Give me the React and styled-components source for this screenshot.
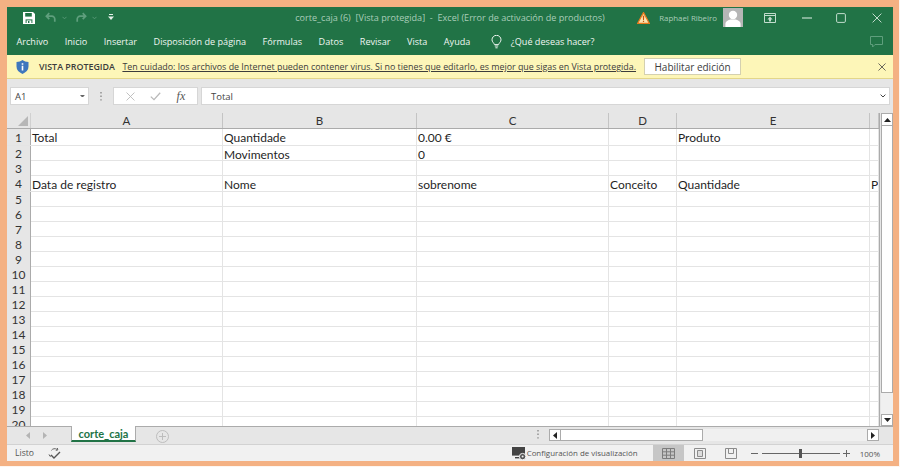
import React from 'react';
import styled, { createGlobalStyle } from 'styled-components';

const Global = createGlobalStyle`
  html, body { margin: 0; padding: 0; background: #fdf6f0; }
  body { font-family: "Open Sans", "Liberation Sans", sans-serif; }
`;

const Frame = styled.div`
  width: 899px;
  height: 466px;
  box-sizing: border-box;
  padding: 7px 6px 5px 7px;
  background: #f4b183;
`;

const Excel = styled.div`
  width: 886px;
  height: 454px;
  display: flex;
  flex-direction: column;
  background: #e6e6e6;
  overflow: hidden;
`;

const TitleBar = styled.div`
  height: 21px;
  flex: none;
  display: grid;
  grid-template-columns: 1fr auto 1fr;
  align-items: center;
  background: #217346;
  color: #a9cdb9;
  font-size: 9.1px;
`;

const Quick = styled.div`
  display: flex;
  align-items: center;
  padding-left: 16px;
`;

const QuickGap = styled.span`
  width: ${p => p.$w}px;
`;

const WinTitle = styled.div`
  white-space: pre;
`;

const WinControls = styled.div`
  display: flex;
  align-items: center;
  justify-content: flex-end;
  padding-right: 4px;
`;

const UserName = styled.span`
  margin: 0 6px 0 9px;
  font-size: 7.9px;
`;

const Avatar = styled.div`
  width: 20px;
  height: 19px;
  display: flex;
  background: #b6b6b6;
`;

const WinBtn = styled.div`
  width: ${p => p.$w}px;
  display: flex;
  justify-content: center;
`;

const MenuBar = styled.div`
  height: 27px;
  flex: none;
  display: flex;
  align-items: center;
  gap: 16.5px;
  padding: 0 10px 0 9.5px;
  background: #217346;
  color: #f0f6f2;
  font-size: 9.1px;
`;

const Ask = styled.div`
  display: flex;
  align-items: center;
  gap: 9px;
  margin-left: 4px;
`;

const Bubble = styled.div`
  margin-left: auto;
  display: flex;
`;

const MessageBar = styled.div`
  height: 24px;
  flex: none;
  box-sizing: border-box;
  display: flex;
  align-items: center;
  padding: 0 6px 0 9px;
  background: #fdf6b8;
  border-bottom: 1px solid #e3d68a;
  color: #3c3c3c;
  font-size: 8.9px;
`;

const MsgTitle = styled.span`
  margin: 0 7.5px 0 10px;
  font-weight: 600;
  font-size: 8.9px;
`;

const MsgLink = styled.span`
  text-decoration: underline;
  white-space: nowrap;
`;

const EnableBtn = styled.div`
  width: 97px;
  height: 17px;
  box-sizing: border-box;
  margin-left: 8px;
  display: flex;
  align-items: center;
  justify-content: center;
  background: #fff;
  border: 1px solid #d4d0b0;
  font-size: 10px;
`;

const MsgClose = styled.div`
  margin-left: auto;
  margin-right: 1px;
  display: flex;
`;

const FormulaBar = styled.div`
  height: 34px;
  flex: none;
  box-sizing: border-box;
  padding: 8px 3px;
  display: flex;
  align-items: stretch;
  background: #e6e6e6;
`;

const FieldBox = styled.div`
  box-sizing: border-box;
  display: flex;
  align-items: center;
  background: #fff;
  border: 1px solid #d6d6d6;
  color: #444;
  font-size: 9.5px;
`;

const NameBox = styled(FieldBox)`
  width: 79px;
  padding: 0 3px 0 4px;
  justify-content: space-between;
`;

const Grip = styled.div`
  width: 24px;
  display: flex;
  align-items: center;
  justify-content: center;
`;

const FxBox = styled(FieldBox)`
  width: 85px;
  justify-content: space-around;
  padding: 0 4px;
`;

const FxGlyph = styled.span`
  font-family: "Liberation Serif", serif;
  font-style: italic;
  font-size: 12px;
  color: #555;
`;

const FormulaInput = styled(FieldBox)`
  flex: 1;
  margin-left: 3px;
  padding: 0 3px 0 9px;
  justify-content: space-between;
`;

const SheetArea = styled.div`
  height: 313px;
  flex: none;
  display: flex;
`;

const GridWrap = styled.div`
  width: 872px;
  overflow: hidden;
  border-right: 1px solid #ababab;
  background: #fff;
  font-family: Lato, "Liberation Sans", sans-serif;
`;

const Cols = '24px 192px 194px 192px 68px 193px 9px';

const HeaderRow = styled.div`
  display: grid;
  grid-template-columns: ${Cols};
  height: 16px;
  box-sizing: border-box;
  background: #e6e6e6;
  border-bottom: 1px solid #ababab;
`;

const Corner = styled.div`
  position: relative;
  border-right: 1px solid #d0d0d0;
  &::after {
    content: "";
    position: absolute;
    right: 2px;
    bottom: 2px;
    width: 0;
    height: 0;
    border-left: 10px solid transparent;
    border-bottom: 10px solid #b7b7b7;
  }
`;

const ColHead = styled.div`
  box-sizing: border-box;
  display: flex;
  align-items: center;
  justify-content: center;
  border-right: 1px solid #c4c4c4;
  color: #333;
  font-size: 11.5px;
`;

const Row = styled.div`
  display: grid;
  grid-template-columns: ${Cols};
  height: ${p => p.$h}px;
  box-sizing: border-box;
  border-bottom: 1px solid #e4e4e4;
`;

const RowHead = styled.div`
  display: flex;
  align-items: center;
  justify-content: center;
  background: #e6e6e6;
  border-right: 1px solid #ababab;
  color: #333;
  font-size: 12px;
`;

const Cell = styled.div`
  box-sizing: border-box;
  padding: 1px 0 0 1px;
  display: flex;
  align-items: center;
  overflow: hidden;
  white-space: nowrap;
  border-right: 1px solid #e4e4e4;
  color: #1f1f1f;
  font-size: 12px;
`;

const VScroll = styled.div`
  width: 12px;
  margin-left: 1px;
  display: flex;
  flex-direction: column;
  background: #f0f0f0;
`;

const ScrollBtn = styled.div`
  flex: none;
  width: 12px;
  height: ${p => p.$h || 12}px;
  box-sizing: border-box;
  display: flex;
  align-items: center;
  justify-content: center;
  background: #fff;
  border: 1px solid #ababab;
`;

const VThumb = styled.div`
  height: 267px;
  flex: none;
  box-sizing: border-box;
  background: #fff;
  border: 1px solid #ababab;
  border-top: 0;
`;

const VTrack = styled.div`
  flex: 1;
`;

const TabBar = styled.div`
  height: 19px;
  flex: none;
  box-sizing: border-box;
  display: flex;
  align-items: flex-start;
  background: #e6e6e6;
  border-top: 1px solid #ababab;
  border-bottom: 1px solid #d2d2d2;
`;

const TabNav = styled.div`
  width: 64px;
  height: 17px;
  box-sizing: border-box;
  padding: 0 24px 0 19px;
  display: flex;
  align-items: center;
  justify-content: space-between;
`;

const Tab = styled.div`
  width: 65px;
  height: 16px;
  box-sizing: border-box;
  display: flex;
  align-items: center;
  justify-content: center;
  background: #fff;
  border-right: 1px solid #ababab;
  border-left: 1px solid #ababab;
  border-bottom: 2px solid #217346;
  margin-top: -1px;
  color: #217346;
  font-family: Lato, "Liberation Sans", sans-serif;
  font-size: 11px;
  font-weight: 700;
`;

const AddTab = styled.div`
  margin: 3px 0 0 20px;
  display: flex;
`;

const HScrollDots = styled.div`
  margin: 3px 0 0 368px;
  display: flex;
`;

const HScroll = styled.div`
  width: 330px;
  height: 12px;
  margin: 2px 0 0 10px;
  display: flex;
  background: #f0f0f0;
`;

const HThumb = styled.div`
  width: 142px;
  box-sizing: border-box;
  background: #fff;
  border: 1px solid #ababab;
  border-left: 0;
`;

const HTrack = styled.div`
  flex: 1;
`;

const StatusBar = styled.div`
  height: 16px;
  flex: none;
  display: flex;
  align-items: center;
  background: #f1f1f1;
  color: #555;
  font-size: 8.6px;
`;

const Ready = styled.span`
  margin: 0 14px 0 8px;
`;

const DisplayCfg = styled.div`
  margin-left: auto;
  display: flex;
  align-items: center;
  gap: 1px;
  font-size: 7.9px;
`;

const ViewBtn = styled.div`
  width: ${p => p.$w}px;
  height: 16px;
  display: flex;
  align-items: center;
  justify-content: center;
  background: ${p => (p.$active ? '#c6c6c6' : 'transparent')};
  margin-left: ${p => p.$ml || 0}px;
`;

const Zoom = styled.div`
  display: flex;
  align-items: center;
  margin-left: 4px;
`;

const Slider = styled.div`
  position: relative;
  width: 78px;
  height: 1px;
  margin: 0 3px 0 4px;
  background: #666;
  &::after {
    content: "";
    position: absolute;
    left: 37px;
    top: -4px;
    width: 3px;
    height: 9px;
    background: #555;
  }
`;

const ZoomLabel = styled.span`
  margin: 0 13px 0 10px;
  font-size: 8px;
`;

const rows = [
  { h: 17, cells: ['Total', 'Quantidade', '0.00 €', '', 'Produto', ''] },
  { h: 15, cells: ['', 'Movimentos', '0', '', '', ''] },
  { h: 15, cells: [] },
  { h: 16, cells: ['Data de registro', 'Nome', 'sobrenome', 'Conceito', 'Quantidade', 'P'] },
];
for (let i = 0; i < 16; i++) rows.push({ h: 15, cells: [] });

const Save = () => (
  <svg width="12" height="12" viewBox="0 0 12 12">
    <path d="M0 0h10l2 2v10H0z" fill="#fff" />
    <path d="M2.2 1h6.6v3.6H2.2z" fill="#217346" />
    <path d="M2.6 7.4h6.8V11H2.6z" fill="#217346" />
    <path d="M3.6 8.4h4.8V11H3.6z" fill="#fff" />
    <path d="M5 9h1.4v2H5z" fill="#217346" />
  </svg>
);

const Undo = ({ flip }) => (
  <svg width="12" height="11" viewBox="0 0 14 12" style={flip ? { transform: 'scaleX(-1)' } : undefined}>
    <path d="M5 1 1.6 4.4 5 7.8M2 4.4h6a3.4 3.4 0 0 1 3.4 3.4V11" fill="none" stroke="#5f9f7d" strokeWidth="2" />
  </svg>
);

const Chevron = ({ color = '#5f9f7d', w = 6 }) => (
  <svg width={w} height="4" viewBox="0 0 6 4">
    <path d="M.6.6 3 3 5.4.6" fill="none" stroke={color} strokeWidth="1" />
  </svg>
);

const Customize = () => (
  <svg width="6" height="7" viewBox="0 0 6 7">
    <path d="M1 0h4v1H1z" fill="#e4f0e9" />
    <path d="M0 2.6h6L3 6z" fill="#e4f0e9" />
  </svg>
);

const Warning = () => (
  <svg width="13" height="12" viewBox="0 0 13 12">
    <path d="M6.5.6 12.4 11.4H.6z" fill="#fbe3b0" stroke="#e97a1c" strokeWidth="1.2" />
    <path d="M5.8 3.8h1.4L7 8H6zM5.9 8.8h1.2V10H5.9z" fill="#c4540a" />
  </svg>
);

const Person = () => (
  <svg width="20" height="19" viewBox="0 0 20 19">
    <circle cx="10" cy="7" r="4.2" fill="#fff" />
    <path d="M2.4 19v-3c0-2.6 3-4 5-4.4h5.2c2 .4 5 1.8 5 4.4v3z" fill="#fff" />
  </svg>
);

const RibbonDisplay = () => (
  <svg width="12" height="10" viewBox="0 0 12 10">
    <path d="M.5.5h11v9H.5z" fill="none" stroke="#c2dccd" />
    <path d="M.5 2.5h11" stroke="#c2dccd" />
    <path d="M6 3.6 8.6 6.4H7V8.4H5V6.4H3.4z" fill="#c2dccd" />
  </svg>
);

const Minimize = () => (
  <svg width="10" height="10" viewBox="0 0 10 10"><path d="M0 5h10" stroke="#c2dccd" strokeWidth="1.2" /></svg>
);

const Maximize = () => (
  <svg width="10" height="10" viewBox="0 0 10 10">
    <rect x=".6" y=".6" width="8.8" height="8.8" rx="1.2" fill="none" stroke="#c2dccd" />
  </svg>
);

const Cross = ({ size = 10, color = '#c2dccd', sw = 1 }) => (
  <svg width={size} height={size} viewBox="0 0 10 10">
    <path d="M.6.6 9.4 9.4M9.4.6.6 9.4" stroke={color} strokeWidth={sw} fill="none" />
  </svg>
);

const Bulb = () => (
  <svg width="11" height="14" viewBox="0 0 11 14">
    <path d="M3.4 9.6C3 7.8 1 7 1 4.8a4.5 4.5 0 0 1 9 0c0 2.2-2 3-2.4 4.8z" fill="none" stroke="#eef5f0" />
    <path d="M3.8 11h3.4M4.4 12.8h2.2" stroke="#eef5f0" />
  </svg>
);

const Comment = () => (
  <svg width="13" height="12" viewBox="0 0 13 12">
    <path d="M.5.5h12v8H5L2.6 11V8.5H.5z" fill="none" stroke="#5f9f7d" />
  </svg>
);

const Shield = () => (
  <svg width="13" height="14" viewBox="0 0 13 14">
    <path d="M6.5 0c1.6 1.3 3.6 2 6 2v4.6c0 3.4-2.4 5.9-6 7.4-3.6-1.5-6-4-6-7.4V2c2.4 0 4.4-.7 6-2z" fill="#3f77bd" />
    <path d="M5.7 3.2h1.6v1.6H5.7zM5.7 5.8h1.6v4.6H5.7z" fill="#fff" />
  </svg>
);

const GripDots = () => (
  <svg width="2" height="9" viewBox="0 0 2 9">
    <path d="M0 0h2v1.4H0zM0 3.6h2V5H0zM0 7.2h2v1.4H0z" fill="#a6a6a6" />
  </svg>
);

const Check = () => (
  <svg width="11" height="9" viewBox="0 0 11 9">
    <path d="M.8 4.6 4 7.6 10.2.8" fill="none" stroke="#b9b9b9" strokeWidth="1.3" />
  </svg>
);

const Tri = ({ dir, color = '#222', scale = 1 }) => {
  const d = { up: 'M0 4 3.5 0 7 4z', down: 'M0 0h7L3.5 4z', left: 'M4 0v7L0 3.5z', right: 'M0 0v7l4-3.5z' }[dir];
  const vert = dir === 'up' || dir === 'down';
  return (
    <svg width={(vert ? 7 : 4) * scale} height={(vert ? 4 : 7) * scale} viewBox={vert ? '0 0 7 4' : '0 0 4 7'}>
      <path d={d} fill={color} />
    </svg>
  );
};

const SmallArrow = ({ flip }) => (
  <svg width="4" height="7" viewBox="0 0 4 7" style={flip ? { transform: 'scaleX(-1)' } : undefined}>
    <path d="M4 0v7L0 3.5z" fill="#b4b4b4" />
  </svg>
);

const PlusCircle = () => (
  <svg width="13" height="13" viewBox="0 0 13 13">
    <circle cx="6.5" cy="6.5" r="6" fill="none" stroke="#bdbdbd" />
    <path d="M6.5 3v7M3 6.5h7" stroke="#bdbdbd" />
  </svg>
);

const Macro = () => (
  <svg width="14" height="13" viewBox="0 0 14 13">
    <path d="M3.4 3.4A4 4 0 0 1 9 2.4M1 7.4l1 2 2-1.2M9.4 1l.4 2-2 .4" fill="none" stroke="#666" />
    <path d="M3 8 6 11 12 5" fill="none" stroke="#555" strokeWidth="1.4" />
  </svg>
);

const MonitorCog = () => (
  <svg width="14" height="13" viewBox="0 0 14 13">
    <path d="M0 0h13v8.6H0z" fill="#444" />
    <path d="M3 10h5v1.4H3z" fill="#444" />
    <circle cx="10.6" cy="9.6" r="3.2" fill="#555" stroke="#f1f1f1" />
    <circle cx="10.6" cy="9.6" r="1" fill="#f1f1f1" />
  </svg>
);

const NormalView = () => (
  <svg width="13" height="11" viewBox="0 0 13 11">
    <path d="M.5.5h12v10H.5zM.5 3.8h12M.5 7.2h12M4.5.5v10M8.5.5v10" fill="none" stroke="#7c7c7c" />
  </svg>
);

const PageView = () => (
  <svg width="12" height="11" viewBox="0 0 12 11">
    <path d="M.5.5h11v10H.5z" fill="none" stroke="#8c8c8c" />
    <path d="M3.5 2.5h5v6h-5z" fill="#ddd" stroke="#8c8c8c" />
  </svg>
);

const BreakView = () => (
  <svg width="12" height="11" viewBox="0 0 12 11">
    <path d="M.5.5h11v10H.5zM3.5.5v5h5v-5" fill="none" stroke="#8c8c8c" />
  </svg>
);

const ZoomMark = ({ plus }) => (
  <svg width="7" height="7" viewBox="0 0 7 7">
    <path d={plus ? 'M0 3.5h7M3.5 0v7' : 'M0 3.5h7'} stroke="#666" fill="none" />
  </svg>
);

export default function App() {
  return (
    <Frame>
      <Global />
      <Excel>
        <TitleBar>
          <Quick>
            <Save />
            <QuickGap $w={10} />
            <Undo />
            <QuickGap $w={5} />
            <Chevron w={5} />
            <QuickGap $w={8} />
            <Undo flip />
            <QuickGap $w={5} />
            <Chevron w={5} />
            <QuickGap $w={11} />
            <Customize />
          </Quick>
          <WinTitle>corte_caja (6)  [Vista protegida]  -  Excel (Error de activación de productos)</WinTitle>
          <WinControls>
            <Warning />
            <UserName>Raphael Ribeiro</UserName>
            <Avatar><Person /></Avatar>
            <WinBtn $w={54}><RibbonDisplay /></WinBtn>
            <WinBtn $w={20}><Minimize /></WinBtn>
            <WinBtn $w={48}><Maximize /></WinBtn>
            <WinBtn $w={24}><Cross /></WinBtn>
          </WinControls>
        </TitleBar>
        <MenuBar>
          <span>Archivo</span>
          <span>Inicio</span>
          <span>Insertar</span>
          <span>Disposición de página</span>
          <span>Fórmulas</span>
          <span>Datos</span>
          <span>Revisar</span>
          <span>Vista</span>
          <span>Ayuda</span>
          <Ask><Bulb /><span>¿Qué deseas hacer?</span></Ask>
          <Bubble><Comment /></Bubble>
        </MenuBar>
        <MessageBar>
          <Shield />
          <MsgTitle>VISTA PROTEGIDA</MsgTitle>
          <MsgLink>Ten cuidado: los archivos de Internet pueden contener virus. Si no tienes que editarlo, es mejor que sigas en Vista protegida.</MsgLink>
          <EnableBtn>Habilitar edición</EnableBtn>
          <MsgClose><Cross size={8} color="#444" /></MsgClose>
        </MessageBar>
        <FormulaBar>
          <NameBox>A1<Tri dir="down" color="#666" scale={0.7} /></NameBox>
          <Grip><GripDots /></Grip>
          <FxBox>
            <Cross size={9} color="#b9b9b9" />
            <Check />
            <FxGlyph>fx</FxGlyph>
          </FxBox>
          <FormulaInput>Total<Chevron color="#444" /></FormulaInput>
        </FormulaBar>
        <SheetArea>
          <GridWrap>
            <HeaderRow>
              <Corner />
              {['A', 'B', 'C', 'D', 'E', ''].map((c, i) => <ColHead key={i}>{c}</ColHead>)}
            </HeaderRow>
            {rows.map((r, i) => (
              <Row key={i} $h={r.h}>
                <RowHead>{i + 1}</RowHead>
                {[0, 1, 2, 3, 4, 5].map(j => <Cell key={j}>{r.cells[j] || ''}</Cell>)}
              </Row>
            ))}
          </GridWrap>
          <VScroll>
            <ScrollBtn $h={13}><Tri dir="up" /></ScrollBtn>
            <VThumb />
            <VTrack />
            <ScrollBtn><Tri dir="down" /></ScrollBtn>
          </VScroll>
        </SheetArea>
        <TabBar>
          <TabNav><SmallArrow /><SmallArrow flip /></TabNav>
          <Tab>corte_caja</Tab>
          <AddTab><PlusCircle /></AddTab>
          <HScrollDots><GripDots /></HScrollDots>
          <HScroll>
            <ScrollBtn><Tri dir="left" /></ScrollBtn>
            <HThumb />
            <HTrack />
            <ScrollBtn><Tri dir="right" /></ScrollBtn>
          </HScroll>
        </TabBar>
        <StatusBar>
          <Ready>Listo</Ready>
          <Macro />
          <DisplayCfg><MonitorCog /><span>Configuración de visualización</span></DisplayCfg>
          <ViewBtn $w={31} $active $ml={15}><NormalView /></ViewBtn>
          <ViewBtn $w={32}><PageView /></ViewBtn>
          <ViewBtn $w={31}><BreakView /></ViewBtn>
          <Zoom>
            <ZoomMark />
            <Slider />
            <ZoomMark plus />
          </Zoom>
          <ZoomLabel>100%</ZoomLabel>
        </StatusBar>
      </Excel>
    </Frame>
  );
}
